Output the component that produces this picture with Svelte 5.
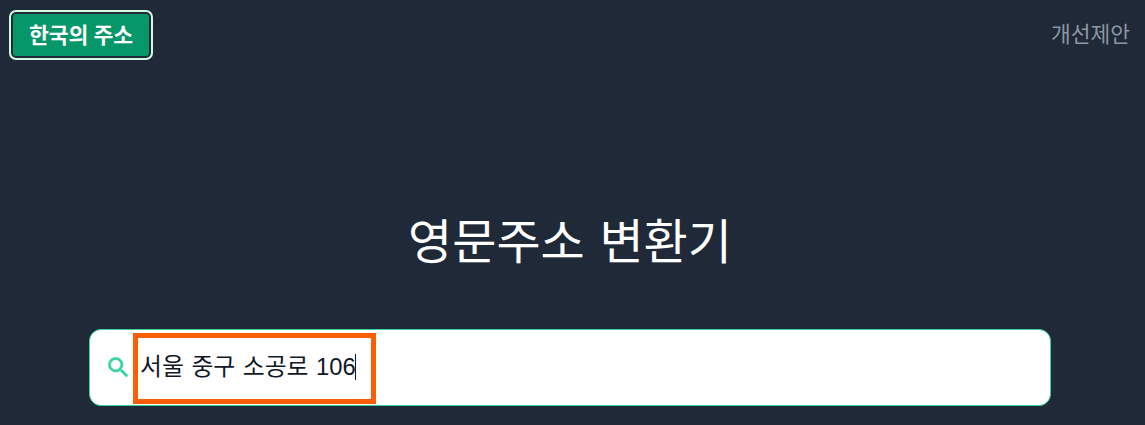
<script>
  let address = $state('서울 중구 소공로 106');
</script>

<div class="page">
  <header class="top">
    <button class="brand">한국의 주소</button>
    <a class="suggest" href="#suggest">개선제안</a>
  </header>

  <main class="main">
    <h1 class="title">영문주소 변환기</h1>
    <div class="search">
      <svg class="icon" viewBox="0 0 24 24" width="27" height="27" aria-hidden="true">
        <path d="M15.5 14h-.79l-.28-.27A6.47 6.47 0 0 0 16 9.5 6.5 6.5 0 1 0 9.5 16c1.61 0 3.09-.59 4.23-1.57l.27.28v.79l5 4.99L20.49 19l-4.99-5zm-6 0C7.01 14 5 11.99 5 9.5S7.01 5 9.5 5 14 7.01 14 9.5 11.99 14 9.5 14z"/>
      </svg>
      <span class="value">{address}<i class="caret"></i></span>
      <span class="mark"></span>
    </div>
  </main>
</div>

<style>
  :global(body) {
    margin: 0;
    background: #1f2937;
  }
  .page {
    height: 425px;
    overflow: hidden;
    background: #1f2937;
    font-family: "Liberation Sans", "Noto Sans CJK KR", sans-serif;
  }
  .top {
    display: flex;
    justify-content: space-between;
    align-items: flex-start;
    padding: 10px 15px 0 9px;
  }
  .brand {
    width: 144px;
    height: 50px;
    padding: 0 0 4px;
    box-sizing: border-box;
    border: 2px solid #d1fae5;
    border-radius: 7px;
    background: #059669;
    box-shadow: inset 0 0 0 2px #1f2937;
    color: #fff;
    font: 700 21.6px "Noto Sans CJK KR", sans-serif;
  }
  .suggest {
    margin-top: 8px;
    color: #8d96a5;
    font-family: "Noto Sans CJK KR", sans-serif;
    font-size: 21.5px;
    line-height: 30px;
    text-decoration: none;
  }
  .main {
    display: flex;
    flex-direction: column;
    align-items: center;
    padding: 148px 5px 0 0;
  }
  .title {
    margin: 0;
    color: #fff;
    font-family: "Noto Sans CJK KR", sans-serif;
    font-size: 48px;
    font-weight: 400;
    word-spacing: 4px;
    line-height: 60px;
  }
  .search {
    position: relative;
    display: flex;
    align-items: center;
    box-sizing: border-box;
    width: 962px;
    height: 77px;
    margin-top: 61px;
    padding-left: 15px;
    border: 1px solid #34d399;
    border-radius: 12px;
    background: #fff;
  }
  .icon {
    flex: none;
    fill: #34d399;
    stroke: #34d399;
    stroke-width: 0.5;
  }
  .value {
    display: inline-flex;
    align-items: center;
    margin: -2px 0 0 8px;
    color: #111827;
    font-size: 23.8px;
    word-spacing: 1px;
    line-height: 30px;
    white-space: pre;
  }
  .caret {
    width: 1px;
    height: 26px;
    margin-left: -1px;
    background: #111827;
  }
  .mark {
    position: absolute;
    left: 43px;
    top: 3px;
    width: 243px;
    height: 71px;
    box-sizing: border-box;
    border: 5px solid #f95f06;
  }
</style>
